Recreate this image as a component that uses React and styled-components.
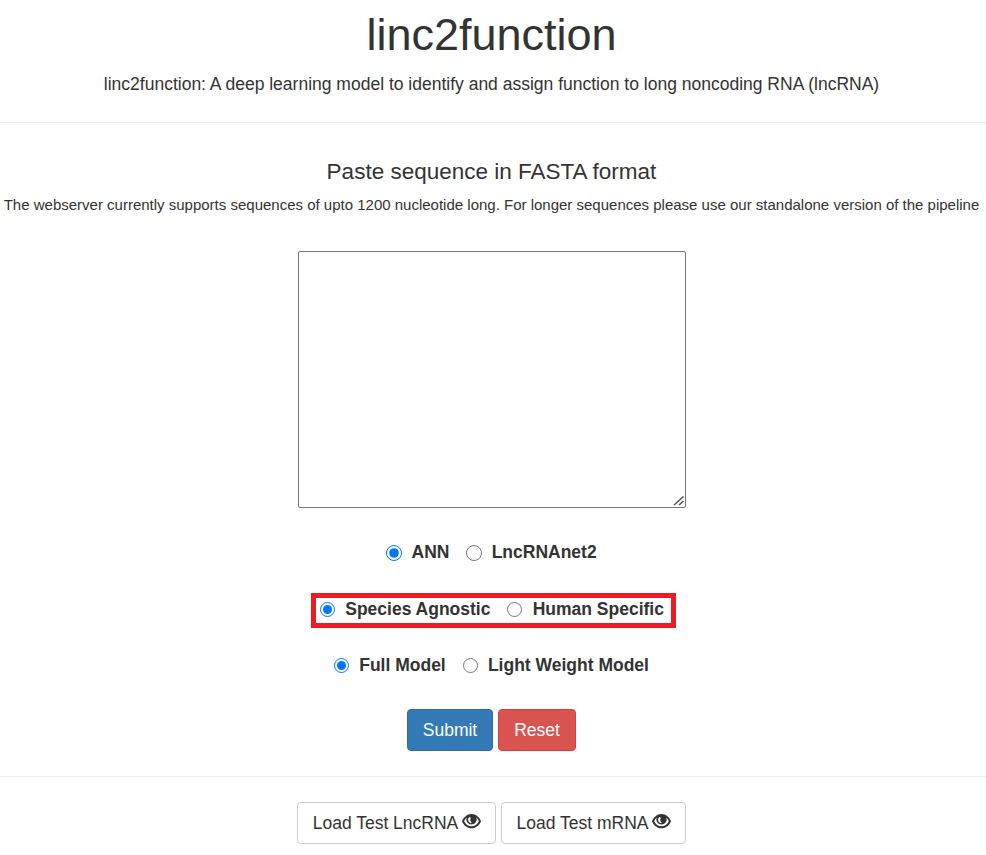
import React from "react";
import styled, { createGlobalStyle } from "styled-components";

const GlobalStyle = createGlobalStyle`
  * { box-sizing: border-box; }
  body {
    margin: 0;
    background: #fff;
    color: #333;
    font-family: "Liberation Sans", Arial, sans-serif;
    overflow: hidden;
  }
`;

const Page = styled.main`
  display: flex;
  flex-direction: column;
  align-items: center;
  width: 986px;
  height: 855px;
  padding-right: 3px;
`;

const Line = styled.p`
  margin: ${(p) => p.$top}px 0 0;
  height: ${(p) => p.$height}px;
  line-height: ${(p) => p.$height}px;
  font-size: ${(p) => p.$size}px;
  white-space: nowrap;
`;

const Title = styled(Line).attrs({ as: "h1" })`
  font-weight: 400;
`;

const Divider = styled.hr`
  align-self: stretch;
  height: 1px;
  margin: ${(p) => p.$top}px -3px 0 0;
  border: 0;
  background: #eee;
`;

const InputFrame = styled.div`
  position: relative;
  width: 388px;
  height: 257px;
  margin: 35px 0 0 1px;
  flex: none;
`;

const SequenceInput = styled.textarea`
  display: block;
  width: 100%;
  height: 100%;
  margin: 0;
  padding: 2px;
  border: 1px solid #767676;
  border-radius: 2px;
  font-size: 17.5px;
  resize: none;
`;

const Grip = styled.svg`
  position: absolute;
  right: 1px;
  bottom: 2px;
  width: 12px;
  height: 11px;
  pointer-events: none;
`;

const OptionRow = styled.div`
  display: flex;
  justify-content: center;
  width: 365px;
  height: 35px;
  margin-top: ${(p) => p.$top}px;
  margin-left: ${(p) => (p.$marked ? 4 : 0)}px;
  padding-right: ${(p) => (p.$marked ? 3 : 0)}px;
  border: 5px solid ${(p) => (p.$marked ? "#ed1c24" : "transparent")};
`;

const Option = styled.label`
  display: flex;
  align-items: center;
  height: 22px;
  font-size: 17.5px;
  font-weight: 700;
  white-space: nowrap;
  & + & { margin-left: 17px; }
`;

const Radio = styled.input`
  width: ${(p) => p.$size}px;
  height: ${(p) => p.$size}px;
  margin: ${(p) => p.$size - 14}px ${(p) => 25.2 - p.$size}px 0 0;
`;

const ButtonRow = styled.div`
  display: flex;
  gap: 5px;
  margin-top: ${(p) => p.$top}px;
`;

const Button = styled.button`
  display: flex;
  align-items: center;
  justify-content: center;
  gap: 4px;
  width: ${(p) => p.$width}px;
  height: 42px;
  padding: 0;
  border: 1px solid ${(p) => p.$border};
  border-radius: 4px;
  background: ${(p) => p.$fill};
  color: ${(p) => p.$color || "#fff"};
  font: 17.5px "Liberation Sans", Arial, sans-serif;
  white-space: nowrap;
`;

const EyeSvg = styled.svg`
  width: 19px;
  height: 15px;
  margin: -3px -1px 0 0;
`;

const Eye = () => (
  <EyeSvg viewBox="0 0 19 15">
    <path fill="#333" fillRule="evenodd" d="M9.500 0C14 0 17.500 3.300 19 7.200c-1.500 3.800-5 7.100-9.500 7.100S1.500 11 0 7.200C1.500 3.300 5 0 9.500 0ZM4.700 3.400C3.600 4.400 2.700 5.700 2.100 7.200c1.500 3 4.200 5 7.400 5s5.900-2 7.400-5c-.6-1.500-1.500-2.800-2.600-3.800a5.200 5.200 0 1 1-9.600 0Z" />
    <path fill="#fff" d="M7.500 3c-2.200 1.700-1.900 5.200 1.600 6.200l.5-1C7.800 7 7.700 5.200 9 3.900Z" />
  </EyeSvg>
);

const groups = [
  { name: "network", top: 28, radioSize: 16, options: ["ANN", "LncRNAnet2"] },
  { name: "species", top: 22, radioSize: 15, marked: true, options: ["Species Agnostic", "Human Specific"] },
  { name: "model", top: 21, radioSize: 15, options: ["Full Model", "Light Weight Model"] },
];

export default function App() {
  return (
    <>
      <GlobalStyle />
      <Page>
        <Title $top={10} $height={49} $size={45}>linc2function</Title>
        <Line $top={12} $height={26} $size={17.5}>linc2function: A deep learning model to identify and assign function to long noncoding RNA (lncRNA)</Line>
        <Divider $top={25} />
        <Line $top={36} $height={26} $size={22.5}>Paste sequence in FASTA format</Line>
        <Line $top={9} $height={22} $size={15}>The webserver currently supports sequences of upto 1200 nucleotide long. For longer sequences please use our standalone version of the pipeline</Line>
        <InputFrame>
          <SequenceInput />
          <Grip viewBox="0 0 12 11">
            <path d="M1 10 10.500 1.500M6 10l4.500-4" fill="none" stroke="#555" strokeWidth="1.600" />
          </Grip>
        </InputFrame>
        {groups.map((g) => (
          <OptionRow key={g.name} $top={g.top} $marked={g.marked}>
            {g.options.map((label, i) => (
              <Option key={label}>
                <Radio type="radio" name={g.name} $size={g.radioSize} defaultChecked={i === 0} />
                {label}
              </Option>
            ))}
          </OptionRow>
        ))}
        <ButtonRow $top={25}>
          <Button $width={86} $fill="#337ab7" $border="#2e6da4">Submit</Button>
          <Button $width={78} $fill="#d9534f" $border="#d43f3a">Reset</Button>
        </ButtonRow>
        <Divider $top={25} />
        <ButtonRow $top={25}>
          <Button $width={199} $fill="#fff" $border="#ccc" $color="#333">Load Test LncRNA <Eye /></Button>
          <Button $width={185} $fill="#fff" $border="#ccc" $color="#333">Load Test mRNA <Eye /></Button>
        </ButtonRow>
      </Page>
    </>
  );
}
